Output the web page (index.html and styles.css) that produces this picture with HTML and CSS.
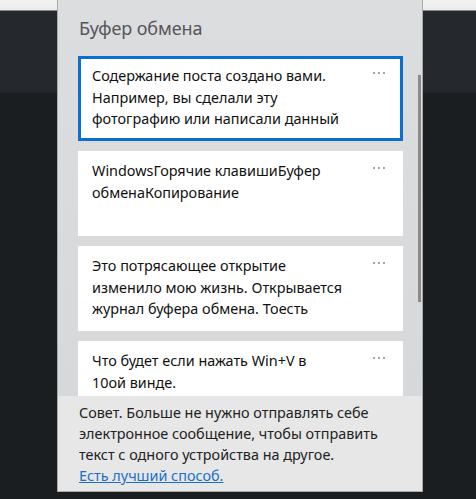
FILE: index.html
```html
<!DOCTYPE html>
<html lang="ru">
<head>
<meta charset="utf-8">
<link rel="stylesheet" href="styles.css">
</head>
<body>
<div class="panel">
  <div class="header">Буфер обмена</div>
  <div class="list-area">
    <div class="list">
      <div class="card selected">
        <div class="card-text">Содержание поста создано вами. Например, вы сделали эту фотографию или написали данный</div>
        <svg class="dots" width="14" height="4" viewBox="0 0 14 4"><circle cx="2" cy="2" r="0.9"/><circle cx="7" cy="2" r="0.9"/><circle cx="12" cy="2" r="0.9"/></svg>
      </div>
      <div class="card">
        <div class="card-text">WindowsГорячие клавишиБуфер обменаКопирование</div>
        <svg class="dots" width="14" height="4" viewBox="0 0 14 4"><circle cx="2" cy="2" r="0.9"/><circle cx="7" cy="2" r="0.9"/><circle cx="12" cy="2" r="0.9"/></svg>
      </div>
      <div class="card">
        <div class="card-text">Это потрясающее открытие изменило мою жизнь. Открывается журнал буфера обмена. Тоесть</div>
        <svg class="dots" width="14" height="4" viewBox="0 0 14 4"><circle cx="2" cy="2" r="0.9"/><circle cx="7" cy="2" r="0.9"/><circle cx="12" cy="2" r="0.9"/></svg>
      </div>
      <div class="card">
        <div class="card-text">Что будет если нажать Win+V в<br>10ой винде.</div>
        <svg class="dots" width="14" height="4" viewBox="0 0 14 4"><circle cx="2" cy="2" r="0.9"/><circle cx="7" cy="2" r="0.9"/><circle cx="12" cy="2" r="0.9"/></svg>
      </div>
    </div>
    <div class="scroll-track"><div class="scroll-thumb"></div></div>
  </div>
  <div class="tip">
    Совет. Больше не нужно отправлять себе электронное сообщение, чтобы отправить текст с одного устройства на другое.<br>
    <a class="tip-link" href="#">Есть лучший способ.</a>
  </div>
</div>
</body>
</html>
```

FILE: styles.css
```css
html, body {
  margin: 0;
  padding: 0;
}
body {
  width: 476px;
  height: 499px;
  overflow: hidden;
  background: linear-gradient(to bottom, #f2f2f2 0, #ececec 10px, #25282c 11px, #25282c 92px, #1b1e21 93px);
  font-family: "Noto Sans", "Open Sans", sans-serif;
}
.panel {
  margin-left: 57px;
  width: 364px;
  height: 491px;
  border: 1px solid #a9aaac;
  border-top: none;
  background: linear-gradient(to bottom, #dcdddf, #d6d7d9);
  display: flex;
  flex-direction: column;
}
.header {
  height: 56px;
  box-sizing: border-box;
  padding: 15px 0 0 21px;
  font-size: 18px;
  line-height: 26px;
  color: #555659;
  letter-spacing: -0.1px;
}
.list-area {
  height: 340px;
  display: flex;
  overflow: hidden;
}
.list {
  margin-left: 20px;
  width: 325px;
  display: flex;
  flex-direction: column;
  gap: 10px;
}
.card {
  flex: none;
  height: 85px;
  box-sizing: border-box;
  background: #ffffff;
  padding: 9px 0 0 14px;
  display: flex;
  align-items: flex-start;
  gap: 22px;
}
.card.selected {
  border: 3px solid #0a6fcf;
  padding: 6px 0 0 11px;
}
.card-text {
  flex: none;
  width: 258px;
  font-size: 14.4px;
  line-height: 21.5px;
  color: #111;
}
.dots {
  flex: none;
  margin-top: 6px;
  fill: #7c7c7c;
}
.scroll-track {
  margin-left: 15px;
  width: 3px;
  padding-top: 19px;
}
.scroll-thumb {
  width: 3px;
  height: 227px;
  background: #8b8b8b;
}
.tip {
  flex: 1;
  background: #e7e7e7;
  padding: 6px 22px 0 21px;
  font-size: 14.4px;
  line-height: 21px;
  color: #222;
}
.tip-link {
  color: #1a6fc9;
  text-decoration: underline;
}
```
